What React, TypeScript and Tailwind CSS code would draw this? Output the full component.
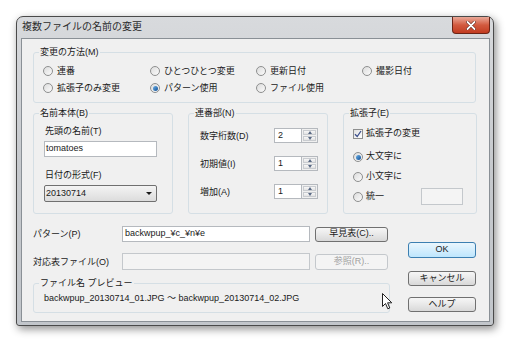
import React from "react";

const FONT = "font-['Liberation_Sans','Noto_Sans_CJK_JP',sans-serif]";

const Radio = ({ checked = false }: { checked?: boolean }) => (
  <span className="w-[10px] h-[10px] shrink-0 rounded-full border border-[#8e8f8f] bg-linear-to-br from-[#dcdcdc] to-[#fbfbfb] flex items-center justify-center">
    {checked && (
      <span className="w-[5px] h-[5px] rounded-full bg-linear-to-br from-[#6ab0e6] to-[#0f4f96]" />
    )}
  </span>
);

const RadioItem = ({ label, checked }: { label: string; checked?: boolean }) => (
  <div className="flex items-center gap-[4px] h-[14px] leading-[14px]">
    <Radio checked={checked} />
    <span>{label}</span>
  </div>
);

const Group = ({
  label,
  className = "",
  children,
}: {
  label: string;
  className?: string;
  children?: React.ReactNode;
}) => (
  <div className={`border border-[#d5dfe5] rounded-[3px] shrink-0 ${className}`}>
    <div className="-mt-[8px] ml-[5px] px-[1px] w-fit bg-[#f0f0f0] leading-[14px]">{label}</div>
    {children}
  </div>
);

const Spin = ({ value }: { value: string }) => (
  <div className="flex h-[15px]">
    <div className="w-[28px] h-[15px] bg-white border border-[#b5b9be] flex items-center pl-[3px]">
      {value}
    </div>
    <div className="w-[16px] h-[15px] flex flex-col border-y border-r border-[#b5b9be]">
      <div className="flex-1 m-[1px] mb-0 border border-[#c9ccd0] bg-linear-to-b from-[#f8f8f8] to-[#e2e2e2] flex items-center justify-center">
        <span className="w-0 h-0 border-x-[2.5px] border-x-transparent border-b-[3px] border-b-[#5a6a85]" />
      </div>
      <div className="flex-1 m-[1px] border border-[#c9ccd0] bg-linear-to-b from-[#f8f8f8] to-[#e2e2e2] flex items-center justify-center">
        <span className="w-0 h-0 border-x-[2.5px] border-x-transparent border-t-[3px] border-t-[#5a6a85]" />
      </div>
    </div>
  </div>
);

const Button = ({
  children,
  className = "",
  primary = false,
  disabled = false,
}: {
  children: React.ReactNode;
  className?: string;
  primary?: boolean;
  disabled?: boolean;
}) => (
  <div
    className={`flex items-center justify-center rounded-[3px] border ${
      primary
        ? "border-[#3c7fb1] bg-linear-to-b from-[#eaf6fd] to-[#bee6fd]"
        : disabled
        ? "border-[#c4c8cc] bg-[#f4f4f4] text-[#a0a0a0]"
        : "border-[#707070] bg-linear-to-b from-[#f6f6f6] via-[#e8e8e8] to-[#d8d8d8]"
    } ${className}`}
  >
    {children}
  </div>
);

const Cursor = () => (
  <svg width="11" height="17" viewBox="0 0 11 17" className="absolute left-[365px] top-[276px]">
    <path
      d="M0.5 0.5 L0.5 13.5 L3.5 10.5 L5.8 15.8 L7.8 15 L5.6 9.8 L9.8 9.8 Z"
      fill="#fff"
      stroke="#222"
      strokeWidth="1"
      strokeLinejoin="round"
    />
  </svg>
);

export default function App() {
  return (
    <div className={`w-[512px] h-[344px] bg-white pl-[16px] pt-[16px] text-[9px] text-[#1a1a1a] ${FONT}`}>
      <div className="relative w-[478px] h-[310px] rounded-t-[7px] rounded-b-[3px] border border-[#4a4a4a] bg-linear-to-b from-[#d8dadd] via-[#c6c9cd] to-[#c2c6cb] shadow-[2px_3px_9px_rgba(0,0,0,0.45)] flex flex-col">
        {/* Title bar */}
        <div className="h-[21px] flex items-start justify-between">
          <div className="pl-[5px] pt-[3px] text-[10px] leading-[14px] text-[#2b2b2b]">
            複数ファイルの名前の変更
          </div>
          <div className="mr-[3px] w-[38px] h-[17px] rounded-b-[4px] border border-t-0 border-[#6b2416] bg-linear-to-b from-[#e9a898] via-[#d25a3f] to-[#c23b1f] flex items-center justify-center">
            <svg width="10" height="9" viewBox="0 0 10 9">
              <path d="M1.5 1 L8.5 8 M8.5 1 L1.5 8" stroke="#5a1a10" strokeWidth="3" strokeLinecap="round" />
              <path d="M1.5 1 L8.5 8 M8.5 1 L1.5 8" stroke="#fff" strokeWidth="1.8" strokeLinecap="round" />
            </svg>
          </div>
        </div>

        {/* Client area */}
        <div className="ml-[4px] mr-[3px] h-[284px] border border-[#8a9096] bg-[#f0f0f0] flex flex-col pl-[11px] pr-[13px]">
          {/* 変更の方法 */}
          <Group label="変更の方法(M)" className="mt-[13px] w-[443px] h-[51px]">
            <div className="mt-[5px] pl-[9px] grid grid-cols-[107px_106px_106px_106px] gap-y-[3px]">
              <RadioItem label="連番" />
              <RadioItem label="ひとつひとつ変更" />
              <RadioItem label="更新日付" />
              <RadioItem label="撮影日付" />
              <RadioItem label="拡張子のみ変更" />
              <RadioItem label="パターン使用" checked />
              <RadioItem label="ファイル使用" />
            </div>
          </Group>

          {/* Three groups */}
          <div className="mt-[10px] flex gap-[15px]">
            <Group label="名前本体(B)" className="w-[140px] h-[101px]">
              <div className="pl-[11px] mt-[4px]">
                <div className="leading-[14px]">先頭の名前(T)</div>
                <div className="mt-[3px] -ml-[1px] w-[113px] h-[16px] bg-white border border-[#b5b9be] flex items-center pl-[1px]">
                  tomatoes
                </div>
                <div className="mt-[11px] leading-[14px]">日付の形式(F)</div>
                <div className="mt-[3px] -ml-[1px] w-[113px] h-[17px] rounded-[2px] border border-[#707070] bg-linear-to-b from-[#f4f4f4] to-[#dcdcdc] flex items-center justify-between pl-[1px] pr-[4px]">
                  <span>20130714</span>
                  <span className="w-0 h-0 border-x-[3px] border-x-transparent border-t-[3px] border-t-[#1a1a1a]" />
                </div>
              </div>
            </Group>

            <Group label="連番部(N)" className="w-[140px] h-[101px]">
              <div className="pl-[11px] mt-[8px] flex flex-col gap-[13px]">
                {[
                  ["数字桁数(D)", "2"],
                  ["初期値(I)", "1"],
                  ["増加(A)", "1"],
                ].map(([label, value]) => (
                  <div key={label} className="flex items-center h-[15px]">
                    <span className="w-[74px] leading-[14px]">{label}</span>
                    <Spin value={value} />
                  </div>
                ))}
              </div>
            </Group>

            <Group label="拡張子(E)" className="w-[134px] h-[101px]">
              <div className="pl-[9px] flex flex-col">
                <div className="mt-[7px] flex items-center gap-[3px] h-[14px]">
                  <span className="w-[10px] h-[10px] border border-[#8e8f8f] bg-linear-to-br from-[#e0e0e0] to-white flex items-center justify-center">
                    <svg width="8" height="8" viewBox="0 0 8 8">
                      <path d="M1 4.2 L3.2 6.5 L7 1" fill="none" stroke="#3b4f8c" strokeWidth="1.3" />
                    </svg>
                  </span>
                  <span>拡張子の変更</span>
                </div>
                <div className="mt-[9px] flex items-center gap-[3px] h-[14px]">
                  <Radio checked />
                  <span>大文字に</span>
                </div>
                <div className="mt-[6px] flex items-center gap-[3px] h-[14px]">
                  <Radio />
                  <span>小文字に</span>
                </div>
                <div className="mt-[4px] flex items-center h-[17px]">
                  <Radio />
                  <span className="ml-[3px] w-[37px]">統一</span>
                  <div className="ml-[18px] w-[42px] h-[17px] border border-[#c4c8cc] bg-[#f4f4f4]" />
                </div>
              </div>
            </Group>
          </div>

          {/* Bottom section */}
          <div className="mt-[12px] flex">
            <div className="w-[357px] flex flex-col">
              <div className="flex items-center h-[16px]">
                <span className="w-[89px] leading-[14px]">パターン(P)</span>
                <div className="w-[188px] h-[16px] bg-white border border-[#b5b9be] flex items-center pl-[2px]">
                  backwpup_¥c_¥n¥e
                </div>
                <Button className="ml-[5px] w-[73px] h-[15px]">早見表(C)..</Button>
              </div>
              <div className="mt-[11px] flex items-center h-[17px]">
                <span className="w-[89px] leading-[14px]">対応表ファイル(O)</span>
                <div className="w-[188px] h-[17px] bg-[#f4f4f4] border border-[#c4c8cc]" />
                <Button disabled className="ml-[5px] w-[73px] h-[16px]">
                  参照(R)..
                </Button>
              </div>
              <Group label="ファイル名 プレビュー" className="mt-[13px] w-[357px] h-[30px]">
                <div className="pl-[10px] mt-[1px] leading-[14px] whitespace-nowrap">
                  backwpup_20130714_01.JPG ～ backwpup_20130714_02.JPG
                </div>
              </Group>
            </div>

            <div className="ml-[18px] w-[69px] flex flex-col">
              <Button primary className="mt-[16px] h-[16px]">
                OK
              </Button>
              <Button className="mt-[13px] h-[15px]">キャンセル</Button>
              <Button className="mt-[11px] h-[15px]">ヘルプ</Button>
            </div>
          </div>
        </div>

        <Cursor />
      </div>
    </div>
  );
}
